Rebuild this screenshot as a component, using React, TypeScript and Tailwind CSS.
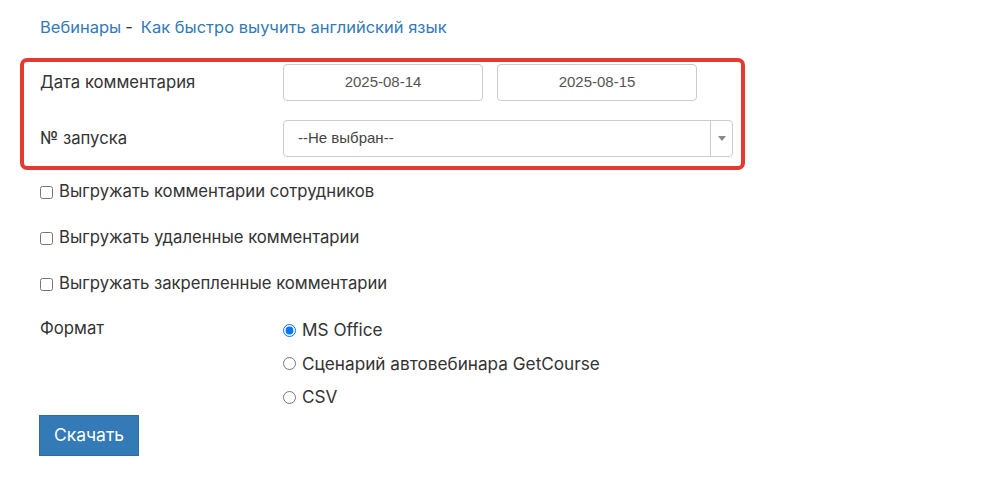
import React from "react";

const blue = "text-[#337ab7]";

function Checkbox({ label }: { label: string }) {
  return (
    <label className="flex h-6 items-center gap-1.5">
      <input type="checkbox" className="h-[13px] w-[13px]" />
      <span>{label}</span>
    </label>
  );
}

function Radio({ label, checked }: { label: string; checked?: boolean }) {
  return (
    <label className="flex h-6 items-center gap-1.5">
      <input type="radio" name="format" defaultChecked={checked} className="h-[13px] w-[13px]" />
      <span>{label}</span>
    </label>
  );
}

export default function App() {
  return (
    <div className="min-h-screen bg-white px-5 pt-[15px] text-[16.7px] text-[#333] font-['Inter','Noto_Sans',sans-serif]">
      {/* Breadcrumb */}
      <div className="flex h-6 items-center pl-5 text-[16.5px]">
        <a className={blue}>Вебинары</a>
        <span className="ml-1 mr-2 text-[#333]">-</span>
        <a className={blue}>Как быстро выучить английский язык</a>
      </div>

      {/* Highlighted filters */}
      <div className="mt-[19px] w-[725px] rounded-[7px] border-4 border-[#e53a31] pl-4 pr-2 pt-[2px] pb-[9px]">
        <div className="flex items-center">
          <div className="w-[243px] shrink-0">Дата комментария</div>
          <div className="flex gap-[14px]">
            {["2025-08-14", "2025-08-15"].map((d) => (
              <div
                key={d}
                className="flex h-[37px] w-[200px] items-center justify-center rounded-[4px] border border-[#ccc] font-['Liberation_Sans',Arial,sans-serif] text-[15px] text-[#555]"
              >
                {d}
              </div>
            ))}
          </div>
        </div>
        <div className="mt-[19px] flex items-center">
          <div className="w-[243px] shrink-0">№ запуска</div>
          <div className="flex h-[37px] w-[450px] shrink-0 items-stretch rounded-[4px] border border-[#ccc] font-['Liberation_Sans',Arial,sans-serif] text-[15px] text-[#444]">
            <div className="flex flex-1 items-center pl-[14px]">--Не выбран--</div>
            <div className="flex w-[22px] items-center justify-center border-l border-[#ccc]">
              <svg width="8" height="5" viewBox="0 0 8 5">
                <path d="M0 0h8L4 5z" fill="#888" />
              </svg>
            </div>
          </div>
        </div>
      </div>

      {/* Options */}
      <div className="mt-[10px] flex flex-col gap-[22px] pl-5">
        <Checkbox label="Выгружать комментарии сотрудников" />
        <Checkbox label="Выгружать удаленные комментарии" />
        <Checkbox label="Выгружать закрепленные комментарии" />
      </div>

      <div className="mt-5 flex pl-5">
        <div className="w-[243px] shrink-0 leading-6">Формат</div>
        <div className="mt-[2px] flex flex-col gap-[9.5px] text-[17.2px]">
          <Radio label="MS Office" checked />
          <Radio label="Сценарий автовебинара GetCourse" />
          <Radio label="CSV" />
        </div>
      </div>

      <div className="mt-[6px] pl-[19px]">
        <button className="h-[41px] w-[100px] bg-[#337ab7] border border-[#2e6da4] text-[17.5px] text-white">
          Скачать
        </button>
      </div>
    </div>
  );
}
